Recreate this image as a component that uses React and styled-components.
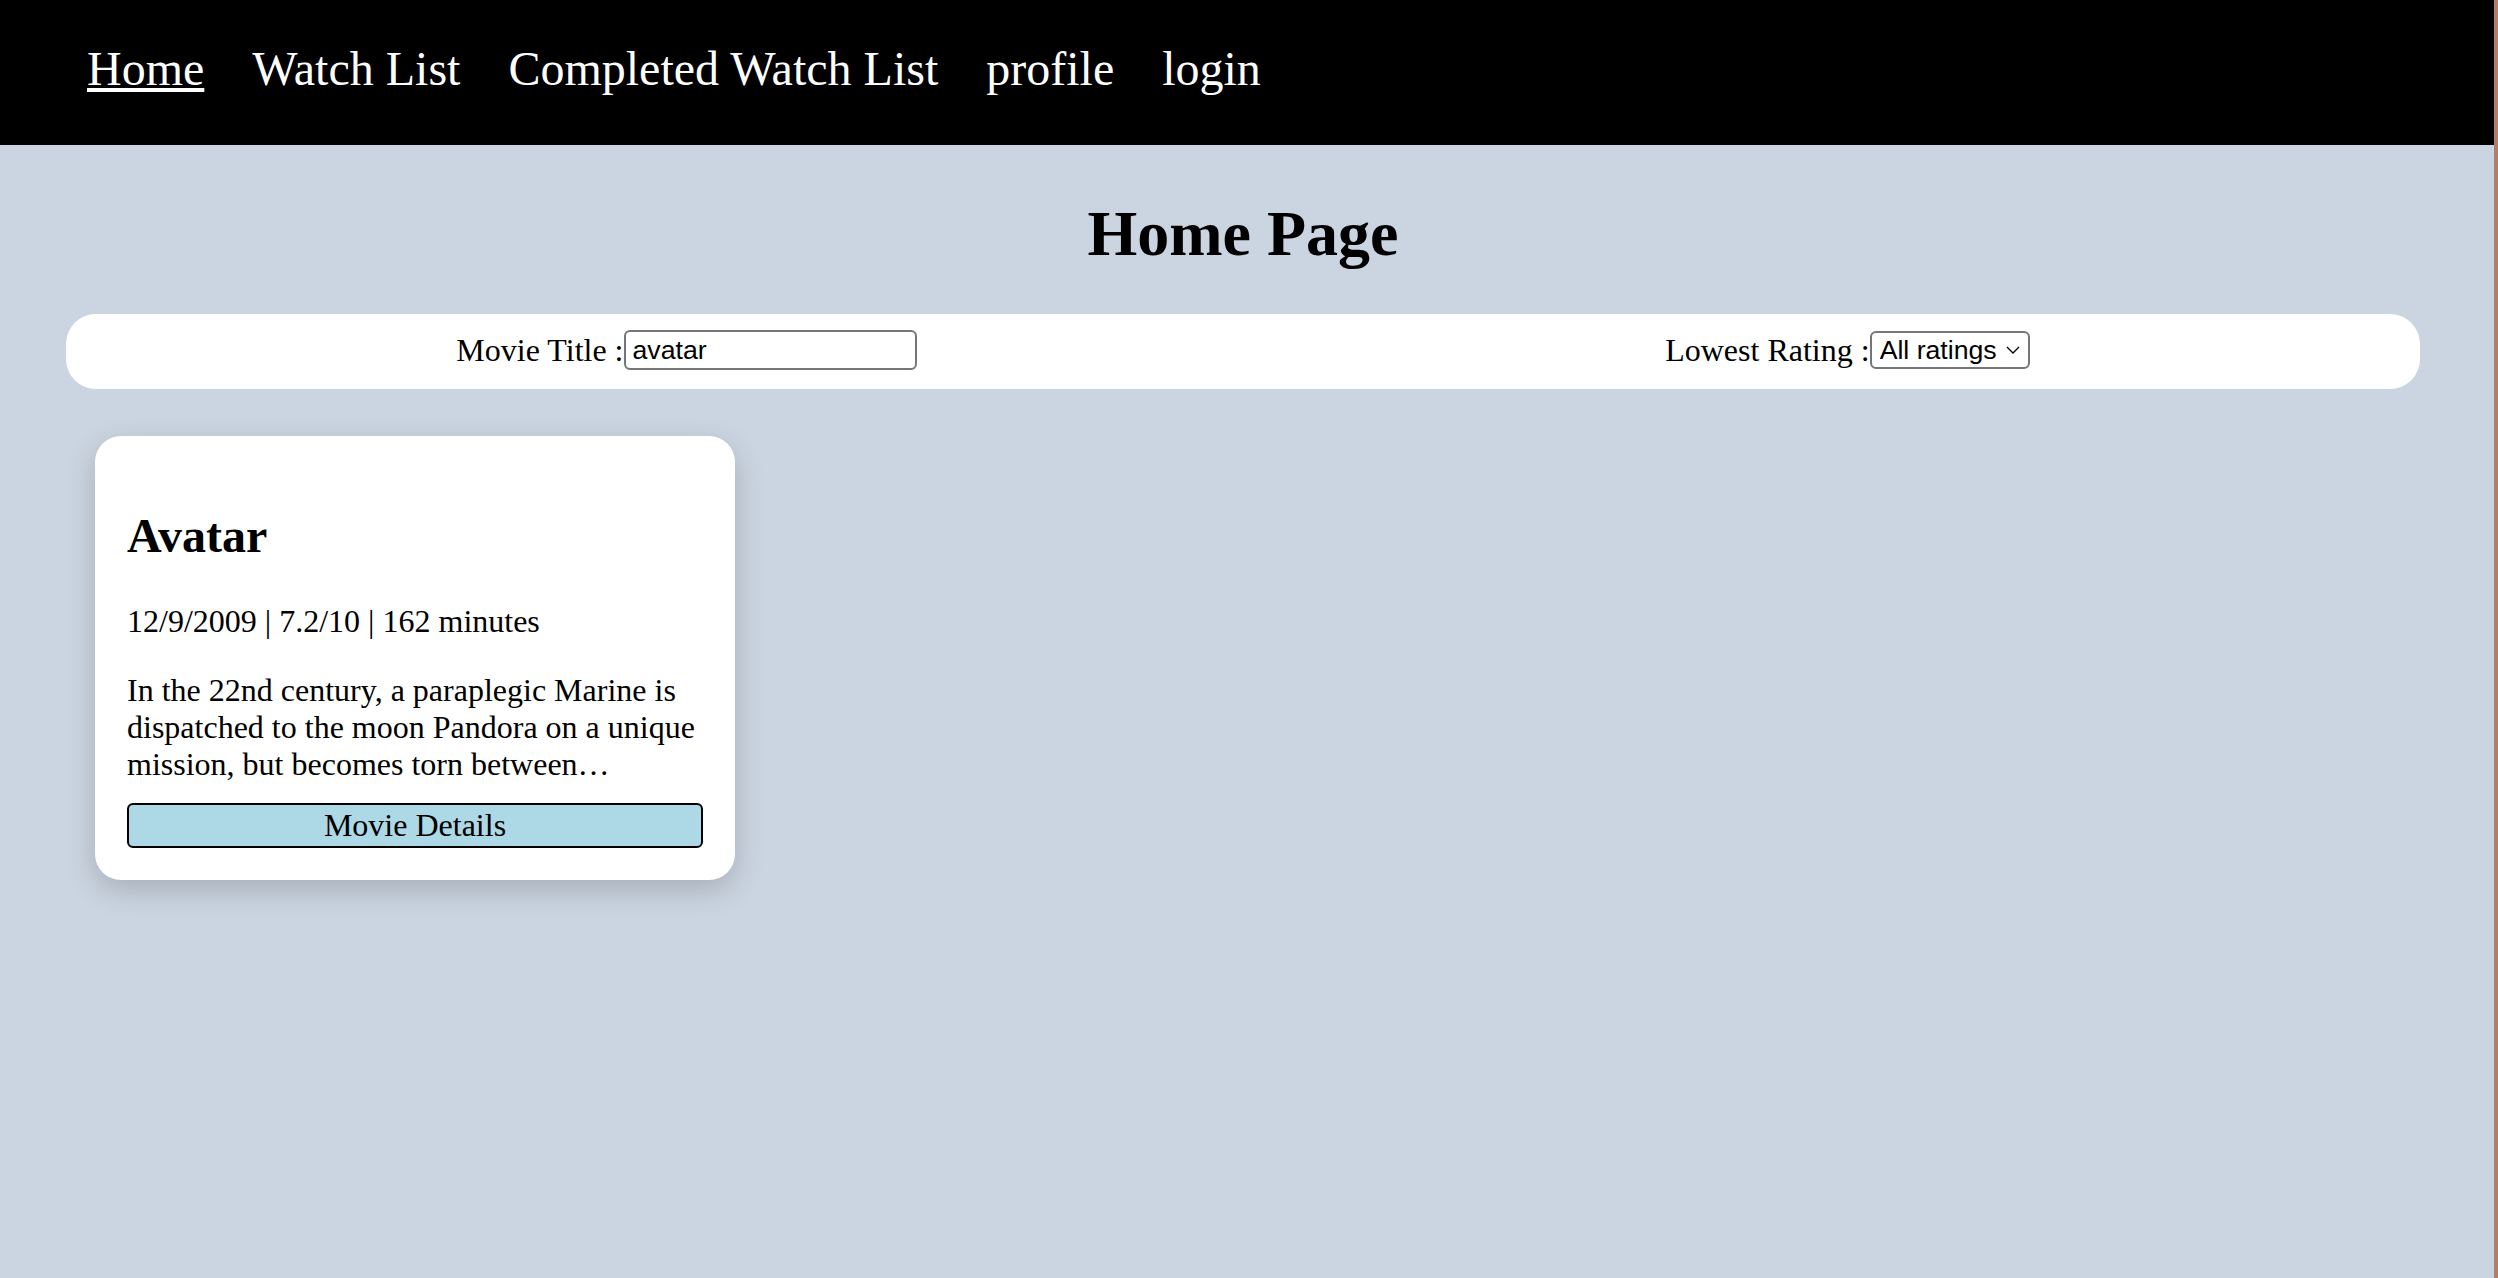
import React from 'react';
import styled, { createGlobalStyle } from 'styled-components';

const movies = [
  {
    id: 19995,
    title: 'Avatar',
    date: '12/9/2009',
    rating: '7.2/10',
    runtime: 162,
    overview:
      'In the 22nd century, a paraplegic Marine is dispatched to the moon Pandora on a unique mission, but becomes torn between following orders and protecting an alien civilization.',
  },
];

const links = ['Home', 'Watch List', 'Completed Watch List', 'profile', 'login'];

// cut the overview to roughly three lines of the card
const shorten = (text, max = 128) => {
  if (text.length <= max) return text;
  const cut = text.slice(0, max);
  return cut.slice(0, cut.lastIndexOf(' ')) + '…';
};

export default function App () {
  return (
    <>
      <GlobalStyle />
      <Page>
        <NavBar>
          <NavList>
            {links.map((l) => (
              <li key={l}><NavLink href="#" $active={l === 'Home'}>{l}</NavLink></li>
            ))}
          </NavList>
        </NavBar>
        <Main>
          <Title>Home Page</Title>
          <FilterBar>
            <Field>
              Movie Title :
              <TextInput type="text" defaultValue="avatar" />
            </Field>
            <Field>
              Lowest Rating :
              <SelectWrap>
                <Select defaultValue="all">
                  <option value="all">All ratings</option>
                </Select>
                <Chevron viewBox="0 0 14 8">
                  <path d="M1 1l6 6 6-6" fill="none" stroke="#000" strokeWidth="1.3" />
                </Chevron>
              </SelectWrap>
            </Field>
          </FilterBar>
          <CardGrid>
            {movies.map((m) => (
              <Card key={m.id}>
                <CardTitle>{m.title}</CardTitle>
                <Meta>{m.date} | {m.rating} | {m.runtime} minutes</Meta>
                <Overview>{shorten(m.overview)}</Overview>
                <DetailsButton>Movie Details</DetailsButton>
              </Card>
            ))}
          </CardGrid>
        </Main>
      </Page>
    </>
  )
}

const GlobalStyle = createGlobalStyle`
  body {
    margin: 0;
    background: #b07f6a;
    font-family: "Liberation Serif", "Times New Roman", serif;
    font-size: 32px;
  }
`

const Page = styled.div`
  margin-right: 4px;
  min-height: 100vh;
  background: #cbd5e1;
`

const NavBar = styled.nav`
  background: #000;
  height: 145px;
  box-sizing: border-box;
  padding: 41px 0 0 87px;
`

const NavList = styled.ul`
  display: flex;
  gap: 48px;
  list-style: none;
  margin: 0;
  padding: 0;
  font-size: 48px;
`

const NavLink = styled.a`
  color: #fff;
  text-decoration: ${(p) => (p.$active ? 'underline' : 'none')};
`

const Main = styled.main`
  padding: 0 74px 0 66px;
`

const Title = styled.h1`
  font-size: 64px;
  text-align: center;
  margin: 52px 0 43px;
`

const FilterBar = styled.div`
  display: flex;
  justify-content: space-around;
  align-items: center;
  height: 75px;
  padding: 0 16px;
  background: #fff;
  border-radius: 30px;
`

const Field = styled.label`
  display: flex;
  align-items: center;
  margin-top: -3px;
`

const TextInput = styled.input`
  width: 293px;
  height: 40px;
  box-sizing: border-box;
  padding: 2px 7px;
  border: 2px solid #767676;
  border-radius: 6px;
  font: 26.67px "Liberation Sans", Arial, sans-serif;
  color: #000;
`

const SelectWrap = styled.span`
  position: relative;
  display: inline-flex;
`

const Select = styled.select`
  appearance: none;
  width: 160px;
  height: 38px;
  box-sizing: border-box;
  padding: 0 30px 0 8px;
  border: 2px solid #767676;
  border-radius: 6px;
  background: #fff;
  font: 26.67px "Liberation Sans", Arial, sans-serif;
  color: #000;
`

const Chevron = styled.svg`
  position: absolute;
  right: 10px;
  top: 15px;
  width: 14px;
  height: 8px;
  pointer-events: none;
`

const CardGrid = styled.div`
  display: grid;
  grid-template-columns: repeat(auto-fill, 640px);
  gap: 40px;
  margin-top: 47px;
  padding: 0 29px;
`

const Card = styled.div`
  box-sizing: border-box;
  width: 640px;
  padding: 32px;
  background: #fff;
  border-radius: 26px;
  box-shadow: 0 10px 30px rgba(0, 0, 0, 0.18);
`

const CardTitle = styled.h2`
  font-size: 48px;
  margin: 40px 0;
`

const Meta = styled.p`
  margin: 40px 0 32px;
`

const Overview = styled.p`
  margin: 32px 0 20px;
`

const DetailsButton = styled.button`
  display: block;
  width: 100%;
  padding: 2px 12px;
  background: #add8e6;
  border: 2px solid #000;
  border-radius: 6px;
  font: 32px "Liberation Serif", "Times New Roman", serif;
  color: #000;
`
